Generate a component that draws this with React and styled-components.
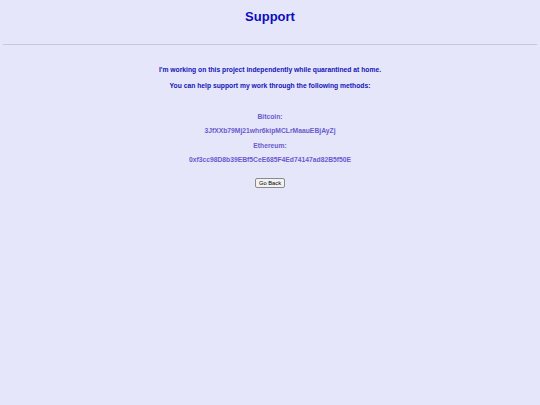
import React from "react";
import styled, { createGlobalStyle } from "styled-components";

const wallets = [
  { id: "btc", name: "Bitcoin", address: "3JfXXb79Mj21whr6kipMCLrMaauEBjAyZj" },
  { id: "eth", name: "Ethereum", address: "0xf3cc98D8b39EBf5CeE685F4Ed74147ad82B5f50E" },
];

const App = () => {
  // Return -------------------------------------------------------------------

  return (
    <>
      <GlobalStyle />
      <StyledSupport>
        <h1 className="headline">Support</h1>
        <hr />
        <div className="intro">
          <p>I'm working on this project independently while quarantined at home.</p>
          <p>You can help support my work through the following methods:</p>
        </div>
        <div className="wallets">
          {wallets.map((wallet) => {
            return (
              <Wallet key={wallet.id}>
                <p>{wallet.name}:</p>
                <p>{wallet.address}</p>
              </Wallet>
            );
          })}
        </div>
        <BackButton type="button">Go Back</BackButton>
      </StyledSupport>
    </>
  );
  // --------------------------------------------------------------------------
};

// Styled Component -----------------------------------------------------------

const GlobalStyle = createGlobalStyle`
  html, body {
    margin: 0;
    padding: 0;
    background: #e6e6fa;
    min-height: 100%;
  }
  body {
    padding: 0 3px;
    font-family: "Liberation Sans", Arial, sans-serif;
  }
`;

const StyledSupport = styled.main`
  display: flex;
  flex-direction: column;
  align-items: center;
  text-align: center;

  .headline {
    margin: 9px 0 0;
    font-size: 13px;
    line-height: 15px;
    color: #0d0dc0;
  }

  hr {
    align-self: stretch;
    margin: 20px 0 0;
    border: none;
    border-top: 1px solid #c8c8d4;
    height: 0;
  }

  .intro {
    margin-top: 21px;
    display: flex;
    flex-direction: column;
    gap: 8px;

    p {
      margin: 0;
      font-size: 6.75px;
      line-height: 8px;
      font-weight: bold;
      color: #1414b8;
    }
  }

  .wallets {
    margin-top: 23px;
    display: flex;
    flex-direction: column;
    gap: 7px;
  }
`;

const Wallet = styled.div`
  display: flex;
  flex-direction: column;
  gap: 6px;

  p {
    margin: 0;
    font-size: 6.75px;
    line-height: 8px;
    font-weight: bold;
    color: #6a5acd;
  }
`;

const BackButton = styled.button`
  margin-top: 14px;
  padding: 1px 3px 0;
  font-family: "Liberation Sans", Arial, sans-serif;
  font-size: 5.75px;
  line-height: 6.5px;
  color: #000;
  background: #f2f2f2;
  border: 1px solid #8a8a8a;
  border-radius: 2px;
  cursor: pointer;
`;
// ----------------------------------------------------------------------------

export default App;
